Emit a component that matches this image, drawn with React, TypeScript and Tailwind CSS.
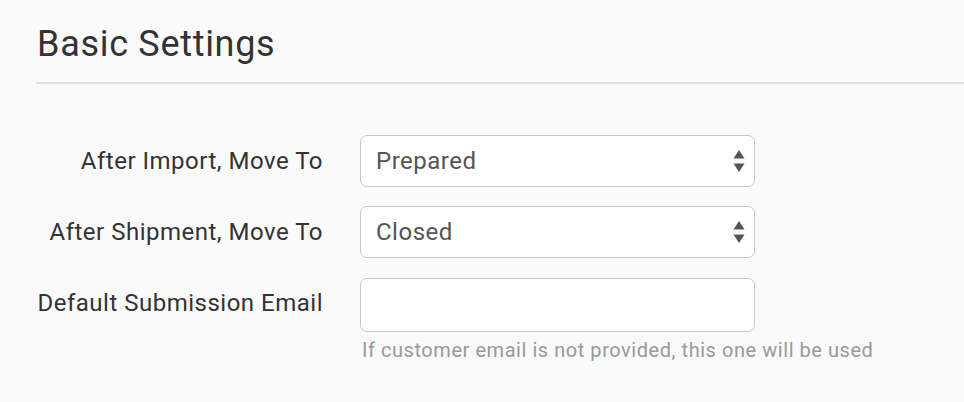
import React from "react";

const SortArrows: React.FC = () => (
  <svg width="12" height="24" viewBox="0 0 12 24" className="text-[#555]">
    <path d="M6 1 L11.5 9.5 H0.5 Z" fill="currentColor" />
    <path d="M0.5 14.5 H11.5 L6 23 Z" fill="currentColor" />
  </svg>
);

const Field: React.FC<{ label: string; children: React.ReactNode }> = ({ label, children }) => (
  <div className="flex items-start">
    <label className="w-[287px] shrink-0 text-right text-[24px] leading-[52px] tracking-[0.5px] text-[#333]">{label}</label>
    <div className="ml-[37px]">{children}</div>
  </div>
);

const SelectBox: React.FC<{ value: string }> = ({ value }) => (
  <div className="flex h-[52px] w-[395px] items-center justify-between rounded-[7px] border border-[#c8c8c8] bg-white pl-[15px] pr-[9px] text-[24px] tracking-[0.5px] text-[#555]">
    <span>{value}</span>
    <SortArrows />
  </div>
);

export default function App() {
  return (
    <div className="min-h-screen w-full bg-[#fafafa] pl-[36px] font-['Roboto',sans-serif]">
      <h2 className="pt-[22px] pb-[16px] pl-[1px] text-[36px] leading-[44px] tracking-[0.7px] text-[#333]">Basic Settings</h2>
      <div className="h-[2px] bg-[#e0e0e0]" />
      <div className="mt-[51px] flex flex-col gap-[19px]">
        <Field label="After Import, Move To">
          <SelectBox value="Prepared" />
        </Field>
        <Field label="After Shipment, Move To">
          <SelectBox value="Closed" />
        </Field>
        <Field label="Default Submission Email">
          <div className="mt-[1px] h-[54px] w-[395px] rounded-[7px] border border-[#c8c8c8] bg-white" />
          <p className="mt-[4px] pl-[2px] text-[20px] leading-[28px] tracking-[0.55px] text-[#999]">If customer email is not provided, this one will be used</p>
        </Field>
      </div>
    </div>
  );
}
